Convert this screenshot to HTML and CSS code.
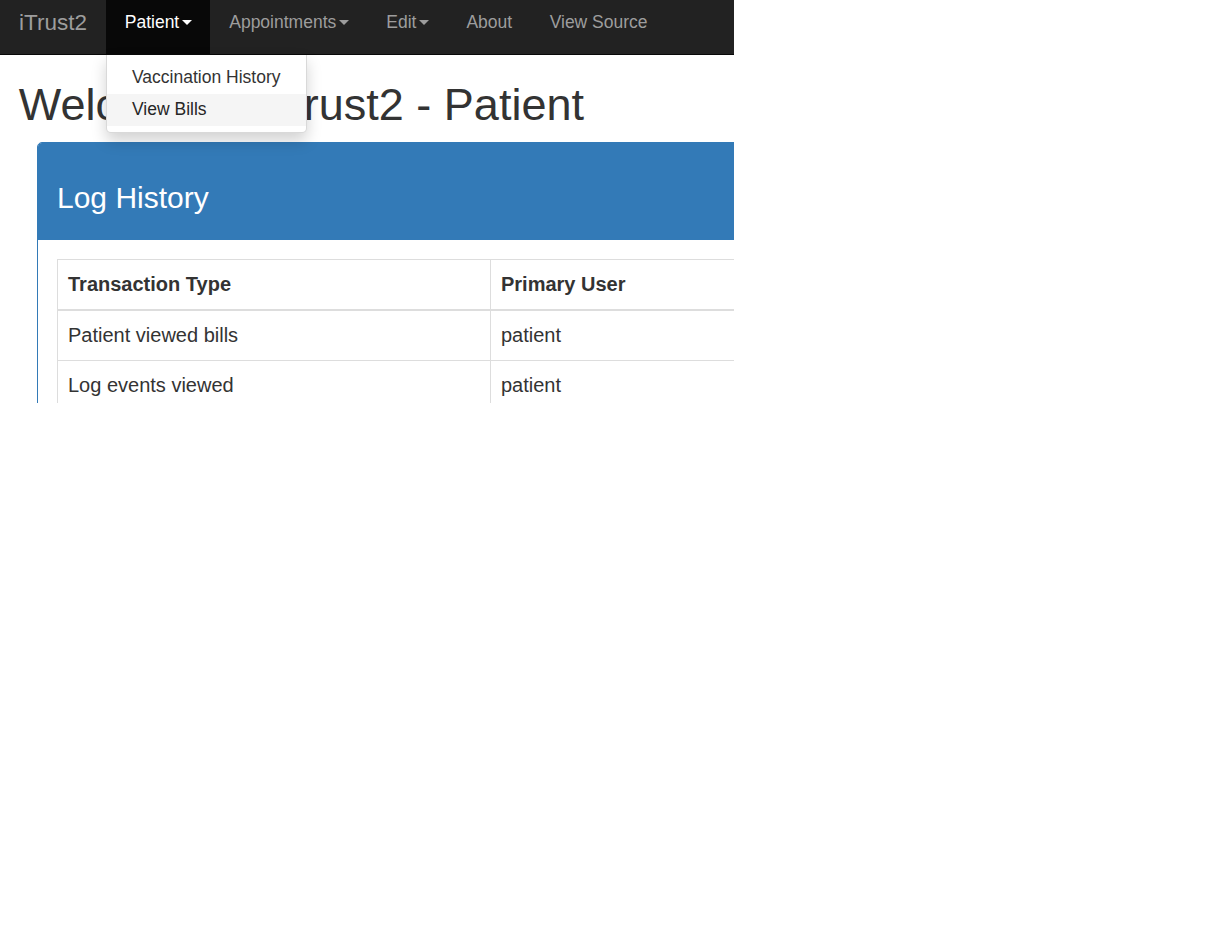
FILE: index.html
```html
<!DOCTYPE html>
<html lang="en">
<head>
<meta charset="utf-8">
<title>iTrust2 - Patient</title>
<link rel="stylesheet" href="styles.css">
</head>
<body>
<div class="viewport">
  <nav class="navbar">
    <a class="brand" href="#">iTrust2</a>
    <ul class="nav">
      <li class="nav-item active dropdown">
        <a class="nav-link" href="#">Patient<span class="caret"></span></a>
        <ul class="dropdown-menu">
          <li><a class="dd-item" href="#">Vaccination History</a></li>
          <li><a class="dd-item hover" href="#">View Bills</a></li>
        </ul>
      </li>
      <li class="nav-item"><a class="nav-link" href="#">Appointments<span class="caret"></span></a></li>
      <li class="nav-item"><a class="nav-link" href="#">Edit<span class="caret"></span></a></li>
      <li class="nav-item"><a class="nav-link" href="#">About</a></li>
      <li class="nav-item"><a class="nav-link" href="#">View Source</a></li>
    </ul>
  </nav>
  <div class="container">
    <h1 class="title">Welcome to iTrust2 - Patient</h1>
    <div class="panel">
      <div class="panel-heading">
        <h3 class="panel-title">Log History</h3>
      </div>
      <div class="panel-body">
        <table class="table">
          <thead>
            <tr><th class="col-type">Transaction Type</th><th>Primary User</th></tr>
          </thead>
          <tbody>
            <tr><td>Patient viewed bills</td><td>patient</td></tr>
            <tr><td>Log events viewed</td><td>patient</td></tr>
          </tbody>
        </table>
      </div>
    </div>
  </div>
</div>
</body>
</html>
```
FILE: styles.css
```css
* { box-sizing: border-box; }
html, body { margin: 0; padding: 0; background: #fff; }
body {
  font-family: "Liberation Sans", Arial, sans-serif;
  font-size: 17.5px;
  line-height: 25px;
  color: #333;
}
a { text-decoration: none; }

.viewport {
  width: 734px;
  height: 403px;
  overflow: hidden;
  position: relative;
}

.navbar {
  display: flex;
  width: 1224px;
  height: 55px;
  background: #222;
  border-bottom: 1px solid #080808;
}
.brand {
  display: block;
  width: 106px;
  height: 54px;
  padding: 9.5px 0 0 19px;
  font-size: 22.5px;
  line-height: 25px;
  color: #9d9d9d;
}
.nav {
  display: flex;
  list-style: none;
  margin: 0;
  padding: 0;
}
.nav-item { position: relative; }
.nav-link {
  display: block;
  height: 54px;
  padding: 9.5px 18.75px 0;
  line-height: 25px;
  color: #9d9d9d;
  white-space: nowrap;
}
.nav-item.active .nav-link {
  background: #080808;
  color: #fff;
}
.caret {
  display: inline-block;
  width: 0;
  height: 0;
  margin-left: 2.5px;
  vertical-align: middle;
  border-top: 5px solid;
  border-left: 5px solid transparent;
  border-right: 5px solid transparent;
}

.dropdown-menu {
  position: absolute;
  top: 55px;
  left: 0;
  z-index: 10;
  min-width: 200px;
  margin: 0;
  padding: 6px 0 6px;
  list-style: none;
  background: #fff;
  border: 1px solid rgba(0,0,0,.15);
  border-top: 0;
  border-radius: 0 0 5px 5px;
  box-shadow: 0 7.5px 15px rgba(0,0,0,.175);
}
.dd-item {
  display: block;
  padding: 3.75px 25px;
  line-height: 25px;
  color: #333;
  white-space: nowrap;
}
.dd-item.hover {
  background: #f5f5f5;
  color: #262626;
}

.container {
  width: 1224px;
  padding: 0 18.75px;
}
.title {
  margin: 25px 0 12.5px;
  font-size: 45px;
  font-weight: 500;
  line-height: 49.5px;
  color: #333;
}

.panel {
  margin-left: 18.25px;
  width: 1150px;
  border: 1px solid #337ab7;
  border-radius: 5px;
  background: #fff;
}
.panel-heading {
  height: 97px;
  padding: 38px 19px 0;
  background: #337ab7;
  color: #fff;
  border-radius: 4px 4px 0 0;
}
.panel-title {
  margin: 0;
  font-size: 30px;
  font-weight: 500;
  line-height: 33px;
}
.panel-body {
  padding: 19px 19px;
}
.table {
  width: 100%;
  border-collapse: collapse;
  border: 1px solid #ddd;
  font-size: 20px;
  line-height: 29px;
}
.table th, .table td {
  padding: 10px 10px;
  border: 1px solid #ddd;
  text-align: left;
  vertical-align: top;
}
.table th { font-weight: bold; }
.table thead th { border-bottom: 2px solid #ddd; }
.col-type { width: 433px; }
```
